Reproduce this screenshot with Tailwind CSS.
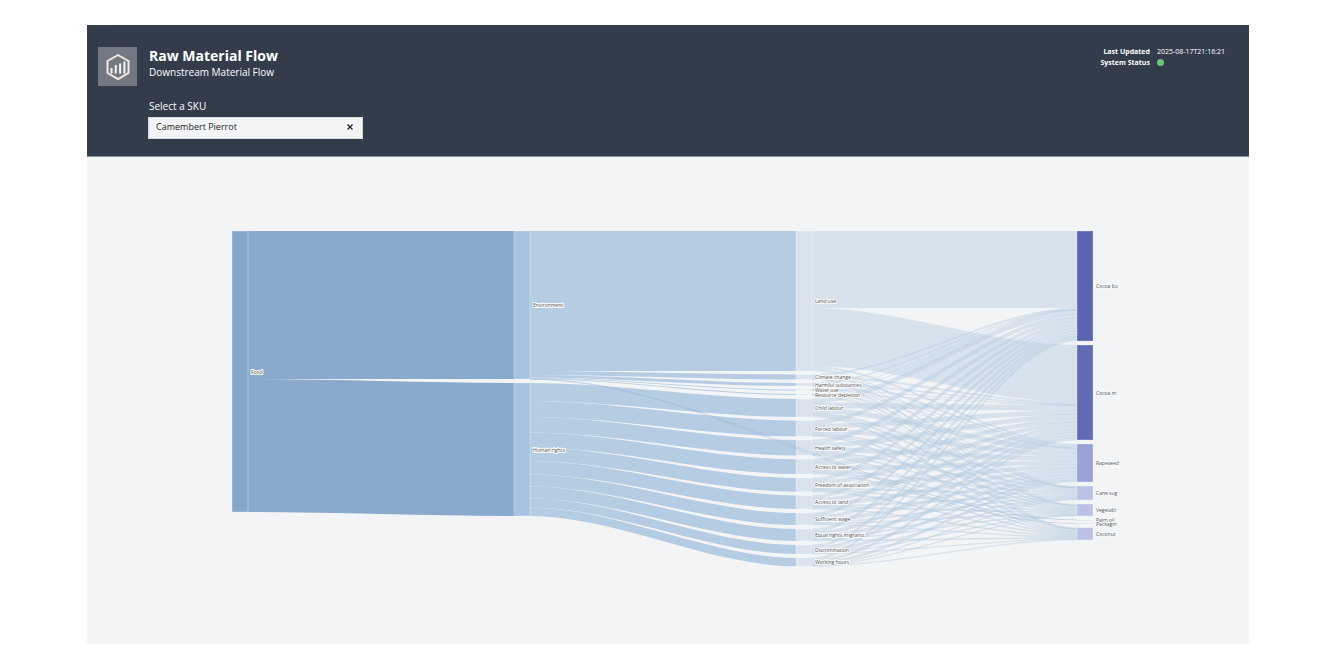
<!DOCTYPE html>
<html lang="en">
<head>
    <meta charset="UTF-8">
    <meta name="viewport" content="width=device-width, initial-scale=1.0">
    <title>Raw Material Flow</title>
    <script src="https://cdn.jsdelivr.net/npm/@tailwindcss/browser@4"></script>
</head>
<body class="bg-white font-['Open_Sans',sans-serif]">
    <div class="px-[87px] py-[25px]">
        <header class="flex items-start justify-between bg-[#333c4b] pl-[11px] pr-6 pt-[22px] pb-[17px] border-b border-[#8b919b]">
            <div class="flex gap-[11px]">
                <div class="flex items-center justify-center w-[39px] h-[39px] bg-[#737983] shrink-0">
                    <svg class="w-[26px] h-[28px]" viewBox="0 0 26 28" fill="none">
                        <path d="M13 2 L23.5 8 V20 L13 26.2 L2.5 20 V8 Z" stroke="#f3e9e2" stroke-width="2" stroke-linejoin="round" />
                        <path d="M6.5 20.5V15 M10.8 20.5V12 M15.1 20.5V10.5 M19.4 20.5V8.5" stroke="#f5f5f7" stroke-width="2" />
                    </svg>
                </div>
                <div>
                    <h1 class="pl-px text-sm leading-[18px] font-bold text-white">Raw Material Flow</h1>
                    <p class="pl-px text-[10px] leading-[14px] text-white">Downstream Material Flow</p>
                    <label for="sku" class="block mt-5 pl-px text-[10px] leading-[14px] text-white">Select a SKU</label>
                    <div class="flex items-start mt-1 w-[215px] h-[22px] bg-[#f3f4f6] border border-[#d5d8dd]">
                        <select id="sku" class="appearance-none grow px-[7px] text-[9px] leading-[18px] text-[#222] outline-none">
                            <option>Camembert Pierrot</option>
                        </select>
                        <button type="button" id="clear" aria-label="Clear" class="flex items-center h-[18px] px-2">
                            <svg class="w-2 h-2" viewBox="0 0 8 8" stroke="#222" stroke-width="1.3">
                                <path d="M1.5 1.5 L6.5 6.5 M6.5 1.5 L1.5 6.5" />
                            </svg>
                        </button>
                    </div>
                </div>
            </div>
            <dl class="grid grid-cols-[auto_auto] gap-x-[7px] -mt-px text-[7px] leading-[11px] text-white">
                <dt class="font-bold text-right">Last Updated</dt>
                <dd>2025-08-17T21:16:21</dd>
                <dt class="font-bold text-right">System Status</dt>
                <dd class="flex items-center"><span class="w-[7px] h-[7px] rounded-full bg-[#6cc576]"></span></dd>
            </dl>
        </header>

        <main class="bg-[#f3f4f6]">
            <svg id="sankey" class="block w-full h-auto" viewBox="0 0 1162 487" role="img" aria-label="Downstream material flow"></svg>
        </main>
    </div>

    <script>
        const NODE_WIDTH = 16;
        const CURVENESS = 0.32;

        // column x, top, height, colour, label
        const nodes = {
            food: { x: 145, y: 74, h: 281, color: '#86a7cc', label: 'Food' },
            env: { x: 427, y: 74, h: 148, color: '#a6c3e0', label: 'Environment' },
            human: { x: 427, y: 226, h: 133, color: '#a6c3e0', label: 'Human rights' }
        };

        const topics = [
            ['Land use', 74, 140, 'env'],
            ['Climate change', 217.5, 5, 'env'],
            ['Harmful substances', 226, 3, 'env'],
            ['Water use', 232.5, 1, 'env'],
            ['Resource depletion', 237, 1, 'env'],
            ['Child labour', 242, 18, 'human'],
            ['Forced labour', 263.5, 16, 'human'],
            ['Health safety', 283, 15.5, 'human'],
            ['Access to water', 302.3, 14.7, 'human'],
            ['Freedom of association', 321, 13.8, 'human'],
            ['Access to land', 338.5, 13.5, 'human'],
            ['Sufficient wage', 356, 12, 'human'],
            ['Equal rights migrants', 372, 12, 'human'],
            ['Discrimination', 388, 9, 'human'],
            ['Working hours', 400.8, 8.5, 'human']
        ];

        // land: share that comes from land use, rest is spread over the other topics
        const materials = [
            { label: 'Cocoa bu', y: 74, h: 110, land: 77, color: '#5a64b2' },
            { label: 'Cocoa m', y: 188, h: 95, land: 58, color: '#606ab6' },
            { label: 'Rapeseed', y: 287, h: 38, land: 2, color: '#9aa2d6' },
            { label: 'Cane sug', y: 329, h: 14, land: 1, color: '#bcc1e5' },
            { label: 'Vegetabl', y: 347, h: 12, land: 1, color: '#bcc1e5' },
            { label: 'Palm oil', y: 363, h: 0.5, land: 0, color: '#bcc1e5' },
            { label: 'Packagin', y: 366.5, h: 0.5, land: 0, color: '#bcc1e5' },
            { label: 'Coconut', y: 370.5, h: 12.5, land: 1, color: '#bcc1e5' }
        ];

        let links = '';
        let bars = '';
        let labels = '';

        function addLink(x0, y0, x1, y1, h0, h1, color) {
            const a = x0 + (x1 - x0) * CURVENESS;
            const b = x1 - (x1 - x0) * CURVENESS;
            return `<path d="M${x0} ${y0}C${a} ${y0} ${b} ${y1} ${x1} ${y1}V${y1 + h1}C${b} ${y1 + h1} ${a} ${y0 + h0} ${x0} ${y0 + h0}Z" fill="${color}" />`;
        }

        function addNode(x, y, h, color, label) {
            bars += `<rect x="${x}" y="${y}" width="${NODE_WIDTH}" height="${h}" fill="${color}" stroke="#fff" stroke-opacity="0.3" stroke-width="1" />`;
            labels += `<text x="${x + NODE_WIDTH + 3}" y="${y + h / 2 + 2}">${label}</text>`;
        }

        links += addLink(161, 74, 427, 74, 148, 148, '#89a9cd');
        links += addLink(161, 222, 427, 226, 133, 133, '#89a9cd');
        Object.values(nodes).forEach(n => addNode(n.x, n.y, n.h, n.color, n.label));

        const sourceY = { env: 74, human: 226 };
        topics.forEach(([label, y, h, from], i) => {
            const out = from === 'env' && i > 0 ? h * 0.8 : h;
            links += addLink(443, sourceY[from], 709, y, out, h, '#b6cce3');
            sourceY[from] += out;
            addNode(709, y, h, '#d9e3ed', label);
        });

        const rest = materials.filter(m => m.h > 1);
        const restTotal = rest.reduce((sum, m) => sum + m.h - m.land, 0);
        const topicTotal = topics.slice(1).reduce((sum, t) => sum + t[2], 0);
        const targetY = new Map(rest.map(m => [m, m.y]));
        topics.forEach(([label, y, h], i) => {
            // thin links get a little extra body so they stay visible
            const pad = i === 0 ? 0 : 0.35;
            let out = y;
            rest.forEach(m => {
                const share = i === 0 ? m.land : h * (m.h - m.land) / restTotal;
                const end = i === 0 ? m.land : (m.h - m.land) * h / topicTotal;
                links += addLink(725, out - pad, 990, targetY.get(m) - pad, share + pad * 2, end + pad * 2, 'rgb(182 204 225 / 0.46)');
                out += share;
                targetY.set(m, targetY.get(m) + end);
            });
        });
        // minor materials fed straight from the environment node
        const direct = addLink(443, 221.5, 990, 362.5, 0.8, 0.8, 'rgb(150 182 215 / 0.5)') +
            addLink(443, 222, 990, 366, 0.8, 0.8, 'rgb(150 182 215 / 0.5)');
        materials.forEach(m => addNode(990, m.y, m.h, m.color, m.label));

        document.getElementById('sankey').innerHTML = links + bars + direct +
            `<g font-size="5" fill="#555" stroke="#f8f9fa" stroke-width="2" stroke-linejoin="round" paint-order="stroke">${labels}</g>`;

        document.getElementById('clear').addEventListener('click', () => {
            document.getElementById('sku').selectedIndex = -1;
        });
    </script>
</body>
</html>
